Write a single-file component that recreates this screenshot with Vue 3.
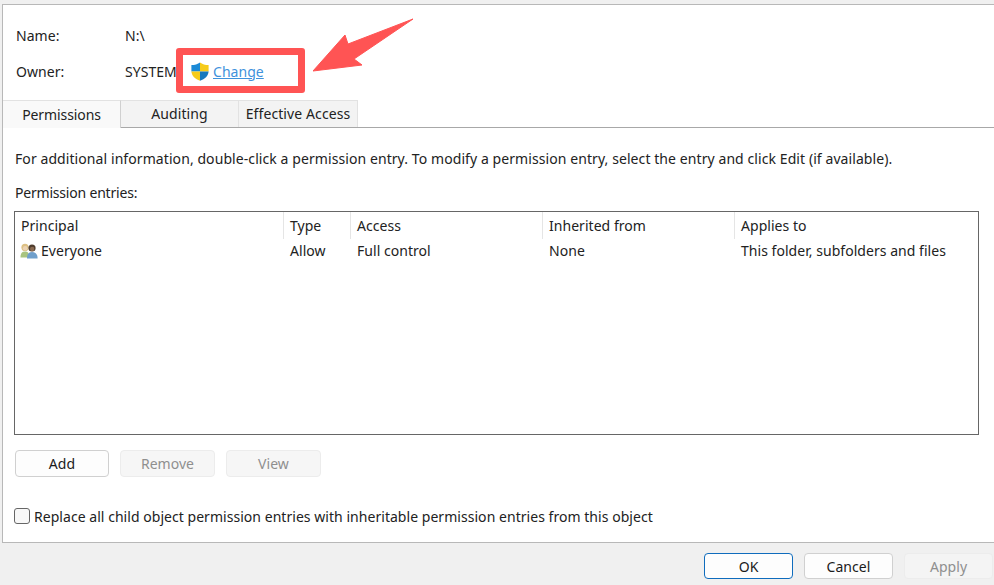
<script setup>
const columns = [
  { label: 'Principal', width: 269 },
  { label: 'Type', width: 67 },
  { label: 'Access', width: 192 },
  { label: 'Inherited from', width: 192 },
  { label: 'Applies to', width: 242 }
]
const cells = ['Allow', 'Full control', 'None', 'This folder, subfolders and files']
</script>

<template>
  <div class="window">
    <div class="panel">
      <div class="info">
        <div class="info-row"><span class="info-label">Name:</span><span>N:\</span></div>
        <div class="info-row owner-row">
          <span class="info-label">Owner:</span>
          <span class="owner">SYSTEM</span>
          <svg class="shield" width="18" height="19" viewBox="0 0 18 19">
            <path d="M9 0.4 C6.8 2 3.6 3 0.4 3 V9.5 H9 Z" fill="#1c8ad6"/>
            <path d="M9 0.4 C11.2 2 14.4 3 17.6 3 V9.5 H9 Z" fill="#f6cb1b"/>
            <path d="M0.4 9.5 H9 V18.8 C4.2 17 0.7 14 0.4 9.5 Z" fill="#f6cb1b"/>
            <path d="M9 9.5 H17.6 C17.3 14 13.8 17 9 18.8 Z" fill="#1779be"/>
          </svg>
          <a class="change">Change</a>
        </div>
      </div>
      <div class="tabs">
        <div class="tab active">Permissions</div>
        <div class="tab auditing">Auditing</div>
        <div class="tab effective">Effective Access</div>
      </div>
      <div class="body">
        <p class="hint">For additional information, double-click a permission entry. To modify a permission entry, select the entry and click Edit (if available).</p>
        <p class="entries-label">Permission entries:</p>
        <div class="list">
          <div class="list-head">
            <div v-for="c in columns" :key="c.label" class="head-cell" :style="{ width: c.width + 'px' }">{{ c.label }}</div>
          </div>
          <div class="list-row">
            <div class="cell principal" :style="{ width: columns[0].width + 'px' }">
              <svg class="users" width="18" height="16" viewBox="0 0 18 16">
                <path d="M0.5 14.5 C0.5 10 2 8.5 5 8.5 C8 8.5 9 10 9 14.5 Z" fill="#a9c47f"/>
                <circle cx="5" cy="4.4" r="3.6" fill="#dcc084"/>
                <circle cx="5.2" cy="5.2" r="2.3" fill="#ecd3b4"/>
                <path d="M7 15.5 C7 11 8.6 9 12 9 C15.4 9 17.6 11 17.6 15.5 Z" fill="#6f9fcb"/>
                <circle cx="12" cy="5" r="3.6" fill="#4f3d2e"/>
                <circle cx="12.2" cy="6" r="2.2" fill="#8a6a50"/>
              </svg>
              Everyone
            </div>
            <div v-for="(t, i) in cells" :key="t" class="cell" :style="{ width: columns[i + 1].width + 'px' }">{{ t }}</div>
          </div>
        </div>
        <div class="actions">
          <button class="btn add">Add</button>
          <button class="btn off">Remove</button>
          <button class="btn off">View</button>
        </div>
        <label class="replace"><span class="check"></span>Replace all child object permission entries with inheritable permission entries from this object</label>
      </div>
    </div>
    <div class="footer">
      <button class="btn wide primary">OK</button>
      <button class="btn wide">Cancel</button>
      <button class="btn wide off apply">Apply</button>
    </div>

    <div class="highlight"></div>
    <svg class="arrow" width="110" height="62" viewBox="0 0 110 62">
      <path d="M100 1 L35 26 L32 17 L0 53 L49 47 L41 41 Z" fill="#ff5454" stroke="#ff5454" stroke-linejoin="round"/>
    </svg>
  </div>
</template>

<style>
html, body { margin: 0; background: #f0f0f0; }
</style>

<style scoped>
.window {
  position: relative;
  width: 994px;
  height: 585px;
  overflow: hidden;
  box-sizing: border-box;
  padding-top: 4px;
  background: #f0f0f0;
  font-family: "Noto Sans", "Open Sans", sans-serif;
  font-size: 14px;
  letter-spacing: 0.04px;
  color: #222;
}
.panel {
  box-sizing: border-box;
  height: 539px;
  margin-left: 2px;
  background: #fff;
  border: 1px solid #b8b8b8;
  border-right: 0;
}
.info { padding: 20px 0 0 13px; }
.info-row { display: flex; align-items: center; height: 20px; }
.owner-row { margin-top: 16px; }
.info-label { width: 109px; }
.owner { width: 65px; }
.shield { display: block; margin: 0 4px 0 1px; }
.change { color: #3f92dc; text-decoration: underline; }
.tabs {
  display: flex;
  height: 27px;
  margin-top: 19px;
  border-bottom: 1px solid #a8a8a8;
}
.tab {
  box-sizing: border-box;
  height: 27px;
  padding-bottom: 2px;
  display: flex;
  align-items: center;
  justify-content: center;
  letter-spacing: 0.1px;
  background: #f3f3f3;
  border: 1px solid #e2e2e2;
  border-bottom: 0;
  border-left: 0;
}
.tab.active {
  width: 118px;
  height: 28px;
  background: #f9f9f9;
  padding: 0;
  letter-spacing: -0.1px;
  border-right-color: #d0d0d0;
  position: relative;
  z-index: 1;
}
.auditing { width: 118px; }
.effective { width: 119px; }
.body { padding: 0 14px 0 11px; }
.hint { margin: 21px 0 0 1px; height: 20px; line-height: 20px; letter-spacing: 0.08px; }
.entries-label { margin: 14px 0 0 1px; height: 20px; line-height: 20px; letter-spacing: -0.2px; }
.list {
  box-sizing: border-box;
  width: 965px;
  height: 224px;
  margin-top: 8px;
  border: 1px solid #666;
}
.list-head, .list-row { display: flex; }
.list-head { height: 27px; }
.list-row { height: 24px; }
.head-cell {
  box-sizing: border-box;
  padding-left: 6px;
  line-height: 27px;
  border-right: 1px solid #e5e5e5;
}
.head-cell:last-child { border-right: 0; }
.cell {
  box-sizing: border-box;
  padding-left: 6px;
  line-height: 24px;
}
.principal { display: flex; align-items: center; padding-left: 5px; gap: 3px; }
.users { display: block; }
.actions { display: flex; gap: 11px; margin: 15px 0 0 1px; }
.btn {
  box-sizing: border-box;
  width: 95px;
  height: 27px;
  padding: 0;
  font: inherit;
  letter-spacing: inherit;
  color: #1b1b1b;
  background: #fdfdfd;
  border: 1px solid #d0d0d0;
  border-radius: 4px;
}
.btn.add { width: 94px; }
.btn.off {
  color: #8f8f8f;
  background: #f6f6f6;
  border-color: #ececec;
}
.replace { display: flex; align-items: center; margin-top: 28px; height: 22px; }
.check {
  box-sizing: border-box;
  width: 16px;
  height: 16px;
  margin-right: 4px;
  background: #f8f8f8;
  border: 1px solid #666;
  border-radius: 3px;
}
.footer {
  display: flex;
  justify-content: flex-end;
  gap: 11px;
  padding: 10px 1px 0 0;
}
.btn.wide { width: 89px; height: 26px; }
.btn.primary { border: 1px solid #0f6cbd; }
.btn.apply { background: #f4f4f4; }
.highlight {
  position: absolute;
  left: 176px;
  top: 48px;
  width: 129px;
  height: 45px;
  box-sizing: border-box;
  border: 7px solid #ff5454;
  border-radius: 3px;
}
.arrow {
  position: absolute;
  left: 313px;
  top: 18px;
}
</style>
